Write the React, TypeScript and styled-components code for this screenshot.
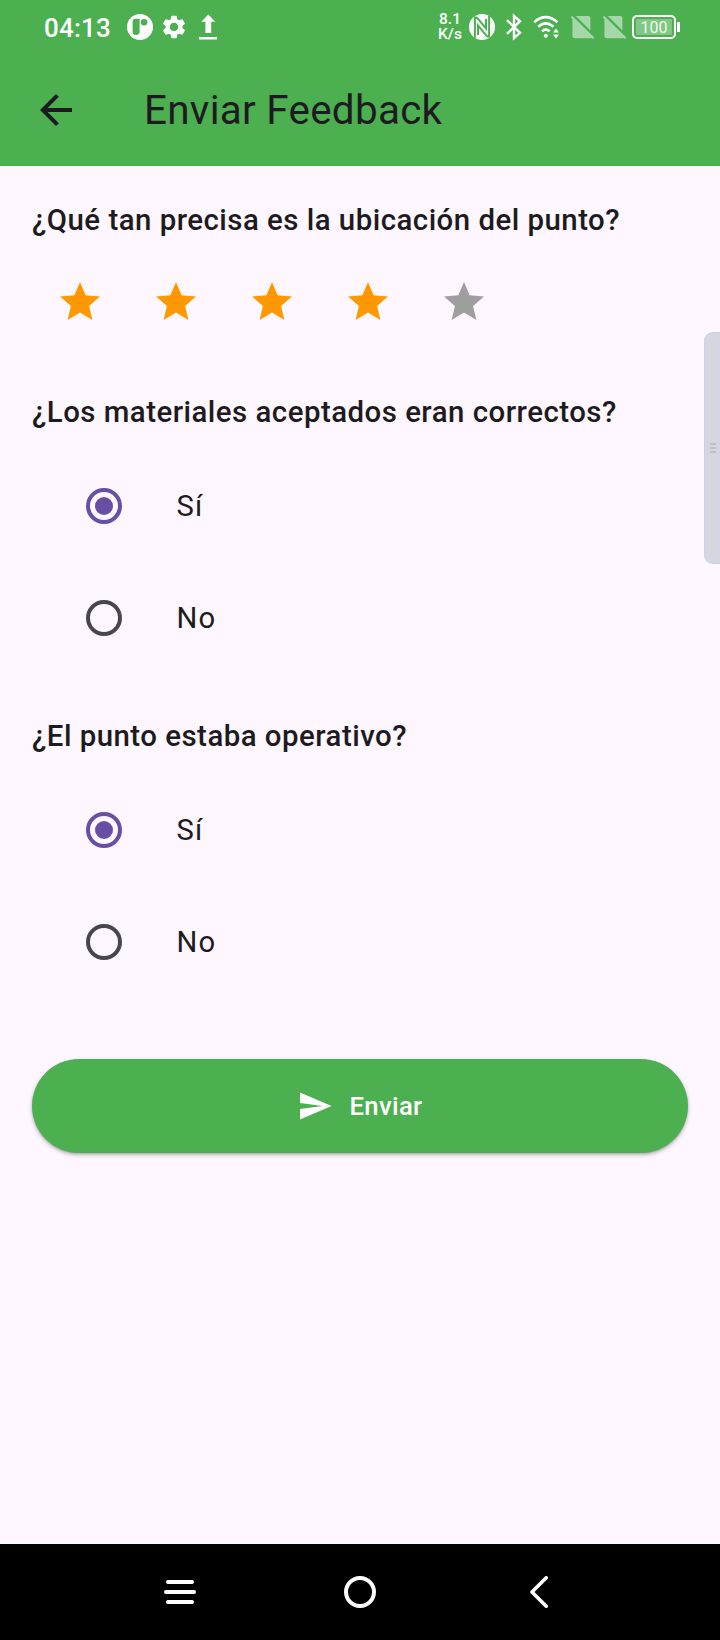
import React, { useState } from 'react';
import styled, { createGlobalStyle } from 'styled-components';

const green = '#4caf50';
const ink = '#1d1b20';

const GlobalStyle = createGlobalStyle`
  * { box-sizing: border-box; }
  body { margin: 0; background: #fef7ff; font-family: Roboto, 'Liberation Sans', sans-serif; }
  button { font: inherit; border: 0; padding: 0; background: none; color: inherit; }
  svg { display: block; flex: none; }
`;

const Screen = styled.div`
  position: relative;
  display: flex;
  flex-direction: column;
  width: 720px;
  height: 1640px;
  overflow: hidden;
  background: #fef7ff;
  color: ${ink};
`;

const StatusBar = styled.div`
  display: flex;
  align-items: center;
  justify-content: space-between;
  height: 54px;
  padding: 0 40px 0 44px;
  background: ${green};
  color: #fff;
`;

const StatusGroup = styled.div`
  display: flex;
  align-items: center;
`;

const StatusItem = styled.div<{ $before?: number }>`
  flex: none;
  margin-left: ${(p) => p.$before ?? 0}px;
`;

const Clock = styled.span`
  width: 83px;
  font-size: 26px;
  line-height: 32px;
  font-weight: 500;
  letter-spacing: 0.2px;
  padding-top: 2px;
`;

const Speed = styled.div`
  width: 24px;
  font-size: 15.5px;
  line-height: 15px;
  font-weight: 500;
  text-align: center;
  white-space: nowrap;
`;

const Battery = styled.div`
  display: flex;
  align-items: center;
`;

const BatteryBody = styled.div`
  width: 44px;
  height: 24px;
  padding: 2px;
  border: 2px solid #fff;
  border-radius: 5px;
`;

const BatteryLevel = styled.div`
  height: 16px;
  border-radius: 1px;
  background: rgba(255, 255, 255, 0.3);
  color: rgba(255, 255, 255, 0.9);
  font-size: 16px;
  line-height: 17px;
  text-align: center;
`;

const BatteryTip = styled.div`
  width: 3px;
  height: 10px;
  margin-left: 1px;
  background: #fff;
`;

const AppBar = styled.header`
  display: flex;
  align-items: center;
  height: 112px;
  background: ${green};
`;

const BackButton = styled.button`
  display: grid;
  place-items: center;
  width: 112px;
  height: 112px;
`;

const Title = styled.h1`
  margin: 2px 0 0 32px;
  font-size: 40.4px;
  line-height: 52px;
  font-weight: 400;
  letter-spacing: 0.28px;
`;

const Content = styled.main`
  flex: 1;
  display: flex;
  flex-direction: column;
  padding: 32px 32px 0;
`;

const Question = styled.h2`
  margin: 0;
  height: 40px;
  font-size: 29.4px;
  line-height: 44px;
  font-weight: 500;
  letter-spacing: 0.49px;
  white-space: nowrap;
`;

const Stars = styled.div`
  display: flex;
  margin: 16px 0 40px;
`;

const StarButton = styled.button`
  display: grid;
  place-items: center;
  width: 96px;
  height: 96px;
`;

const Options = styled.div<{ $after: number }>`
  display: flex;
  flex-direction: column;
  margin: 20px 0 ${(p) => p.$after}px;
`;

const Option = styled.button`
  display: flex;
  align-items: center;
  gap: 54.5px;
  height: 112px;
  padding-left: 54px;
  text-align: left;
`;

const RadioRing = styled.span<{ $on: boolean }>`
  display: grid;
  place-items: center;
  width: 36px;
  height: 36px;
  border: 4px solid ${(p) => (p.$on ? '#6750a4' : '#49454f')};
  border-radius: 50%;
`;

const RadioDot = styled.span`
  width: 18px;
  height: 18px;
  border-radius: 50%;
  background: #6750a4;
`;

const OptionLabel = styled.span`
  font-size: 29.2px;
  line-height: 44px;
  letter-spacing: 1.1px;
`;

const SubmitButton = styled.button`
  display: flex;
  align-items: center;
  justify-content: center;
  gap: 16px;
  height: 94px;
  border-radius: 47px;
  background: ${green};
  color: #fff;
  font-size: 25.7px;
  font-weight: 500;
  letter-spacing: 0.35px;
  box-shadow: 0 2px 4px rgba(0, 0, 0, 0.26), 0 1px 2px rgba(0, 0, 0, 0.12);
`;

const EdgePanel = styled.div`
  position: absolute;
  top: 332px;
  right: 0;
  display: flex;
  flex-direction: column;
  justify-content: center;
  gap: 2px;
  width: 16px;
  height: 232px;
  padding-left: 5px;
  border: 1px solid #c5d3ea;
  border-right: 0;
  border-radius: 9px 0 0 9px;
  background: #d6d6e0;
`;

const Grip = styled.span`
  width: 6px;
  height: 2px;
  background: #c0c0cc;
`;

const NavBar = styled.nav`
  display: flex;
  align-items: center;
  justify-content: center;
  gap: 84px;
  height: 96px;
  background: #000;
`;

const NavButton = styled.button`
  display: grid;
  place-items: center;
  width: 96px;
  height: 96px;
`;

const ParkingIcon = () => (
  <svg width="26" height="32" viewBox="0 0 26 32">
    <circle cx="13" cy="16" r="13" fill="#fff" />
    <path d="M8.4 7.8H12.6V20.6A3.5 3.5 0 0 1 5.6 20.6V10.6Q5.6 7.8 8.4 7.8Z" fill={green} />
    <circle cx="17.1" cy="11.2" r="3.3" fill={green} />
  </svg>
);

const GearIcon = () => (
  <svg width="28" height="28" viewBox="0 0 24 24" fill="#fff">
    <path d="M19.14 12.94c.04-.3.06-.61.06-.94 0-.32-.02-.64-.07-.94l2.03-1.58c.18-.14.23-.41.12-.61l-1.92-3.32c-.12-.22-.37-.29-.59-.22l-2.39.96c-.5-.38-1.03-.7-1.62-.94l-.36-2.54c-.04-.24-.24-.41-.48-.41h-3.84c-.24 0-.43.17-.47.41l-.36 2.54c-.59.24-1.13.57-1.62.94l-2.39-.96c-.22-.08-.47 0-.59.22L2.74 8.87c-.12.21-.08.47.12.61l2.03 1.58c-.05.3-.09.63-.09.94s.02.64.07.94l-2.03 1.58c-.18.14-.23.41-.12.61l1.92 3.32c.12.22.37.29.59.22l2.39-.96c.5.38 1.03.7 1.62.94l.36 2.54c.05.24.24.41.48.41h3.84c.24 0 .44-.17.47-.41l.36-2.54c.59-.24 1.13-.56 1.62-.94l2.39.96c.22.08.47 0 .59-.22l1.92-3.32c.12-.22.07-.47-.12-.61l-2.01-1.58zM12 15.6c-1.98 0-3.6-1.62-3.6-3.6s1.62-3.6 3.6-3.6 3.6 1.62 3.6 3.6-1.62 3.6-3.6 3.6z" />
  </svg>
);

const UploadIcon = () => (
  <svg width="18" height="32" viewBox="0 0 18 32" fill="#fff">
    <path d="M9.3 3.6L16.3 10.8H12.2V22H6.4V10.8H2.3ZM0 26H18V28.4H0Z" />
  </svg>
);

const NfcIcon = () => (
  <svg width="26" height="32" viewBox="0 0 26 32">
    <circle cx="13" cy="16" r="13" fill="#fff" />
    <path d="M5.9 27V6.4L8 6.6L17 17.4V8M20.1 5V25.6L18 25.4L9 14.6V24" fill="none" stroke={green} strokeWidth="2" />
  </svg>
);

const BluetoothIcon = () => (
  <svg width="16" height="32" viewBox="0 0 16 32" fill="none" stroke="#fff" strokeWidth="2.4">
    <path d="M1 9.2L14 21.8L8 27V5L14 10.2L1 22.8" />
  </svg>
);

const WifiIcon = () => (
  <svg width="28" height="32" viewBox="0 0 28 32" fill="none" stroke="#fff" strokeWidth="2.6">
    <path d="M1.2 11.2Q12.6 1.2 24.4 11.2M5.2 15.8Q12.8 9 20.4 15.8M9 20.2Q12.8 17 16.6 20.2" />
    <circle cx="12.8" cy="24.8" r="2" fill="#fff" stroke="none" />
    <path d="M20 21.6L23 17.6L26 21.6ZM20 23.4H26L23 27.4Z" fill="#fff" stroke="none" />
  </svg>
);

const NoSimIcon = () => (
  <svg width="24" height="32" viewBox="0 0 24 32" fill="#fff" fillOpacity="0.5">
    <path d="M4.8 5H17.4Q19.4 5 19.4 7V19.6Z" />
    <path d="M-0.4 6.3L1.1 4.8L23.4 26.6L21.9 28.1L20.6 26.8V27.2H3.4Q1.4 27.2 1.4 25.2V8Z" />
  </svg>
);

const StarIcon = ({ filled }: { filled: boolean }) => (
  <svg width="48" height="48" viewBox="0 0 24 24" fill={filled ? '#ff9800' : '#9e9e9e'}>
    <path d="M12 17.27L18.18 21l-1.64-7.03L22 9.24l-7.19-.61L12 2 9.19 8.63 2 9.24l5.46 4.73L5.82 21z" />
  </svg>
);

const YesNo = ({ after }: { after: number }) => {
  const [value, setValue] = useState('Sí');
  return (
    <Options $after={after} role="radiogroup">
      {['Sí', 'No'].map((label) => (
        <Option key={label} role="radio" aria-checked={value === label} onClick={() => setValue(label)}>
          <RadioRing $on={value === label}>{value === label && <RadioDot />}</RadioRing>
          <OptionLabel>{label}</OptionLabel>
        </Option>
      ))}
    </Options>
  );
};

export default function App() {
  const [rating, setRating] = useState(4);
  return (
    <>
      <GlobalStyle />
      <Screen>
        <StatusBar>
          <StatusGroup>
            <Clock>04:13</Clock>
            <StatusItem><ParkingIcon /></StatusItem>
            <StatusItem $before={7}><GearIcon /></StatusItem>
            <StatusItem $before={11}><UploadIcon /></StatusItem>
          </StatusGroup>
          <StatusGroup>
            <Speed>
              8.1
              <br />
              K/s
            </Speed>
            <StatusItem $before={7}><NfcIcon /></StatusItem>
            <StatusItem $before={11}><BluetoothIcon /></StatusItem>
            <StatusItem $before={11}><WifiIcon /></StatusItem>
            <StatusItem $before={10}><NoSimIcon /></StatusItem>
            <StatusItem $before={8}><NoSimIcon /></StatusItem>
            <StatusItem $before={5}>
              <Battery>
                <BatteryBody>
                  <BatteryLevel>100</BatteryLevel>
                </BatteryBody>
                <BatteryTip />
              </Battery>
            </StatusItem>
          </StatusGroup>
        </StatusBar>
        <AppBar>
          <BackButton aria-label="Atrás">
            <svg width="48" height="48" viewBox="0 0 24 24" fill={ink}>
              <path d="M20 11H7.83l5.59-5.59L12 4l-8 8 8 8 1.41-1.41L7.83 13H20v-2z" />
            </svg>
          </BackButton>
          <Title>Enviar Feedback</Title>
        </AppBar>
        <Content>
          <Question>¿Qué tan precisa es la ubicación del punto?</Question>
          <Stars>
            {[1, 2, 3, 4, 5].map((n) => (
              <StarButton key={n} aria-label={`${n}`} onClick={() => setRating(n)}>
                <StarIcon filled={n <= rating} />
              </StarButton>
            ))}
          </Stars>
          <Question>¿Los materiales aceptados eran correctos?</Question>
          <YesNo after={40} />
          <Question>¿El punto estaba operativo?</Question>
          <YesNo after={61} />
          <SubmitButton>
            <svg width="36" height="36" viewBox="0 0 24 24" fill="#fff">
              <path d="M2.01 21L23 12 2.01 3 2 10l15 2-15 2z" />
            </svg>
            Enviar
          </SubmitButton>
        </Content>
        <NavBar>
          <NavButton aria-label="Recientes">
            <svg width="32" height="32" viewBox="0 0 32 32" stroke="#fff" strokeWidth="4" strokeLinecap="round">
              <path d="M4 6H28M2 16H30M4 26H28" />
            </svg>
          </NavButton>
          <NavButton aria-label="Inicio">
            <svg width="32" height="32" viewBox="0 0 32 32" fill="none" stroke="#fff" strokeWidth="4">
              <circle cx="16" cy="16" r="14" />
            </svg>
          </NavButton>
          <NavButton aria-label="Volver">
            <svg width="32" height="32" viewBox="0 0 32 32" fill="none" stroke="#fff" strokeWidth="3.6" strokeLinecap="round" strokeLinejoin="round">
              <path d="M22.2 1.8L8 16L22.2 30.2" />
            </svg>
          </NavButton>
        </NavBar>
        <EdgePanel>
          <Grip />
          <Grip />
          <Grip />
        </EdgePanel>
      </Screen>
    </>
  );
}
